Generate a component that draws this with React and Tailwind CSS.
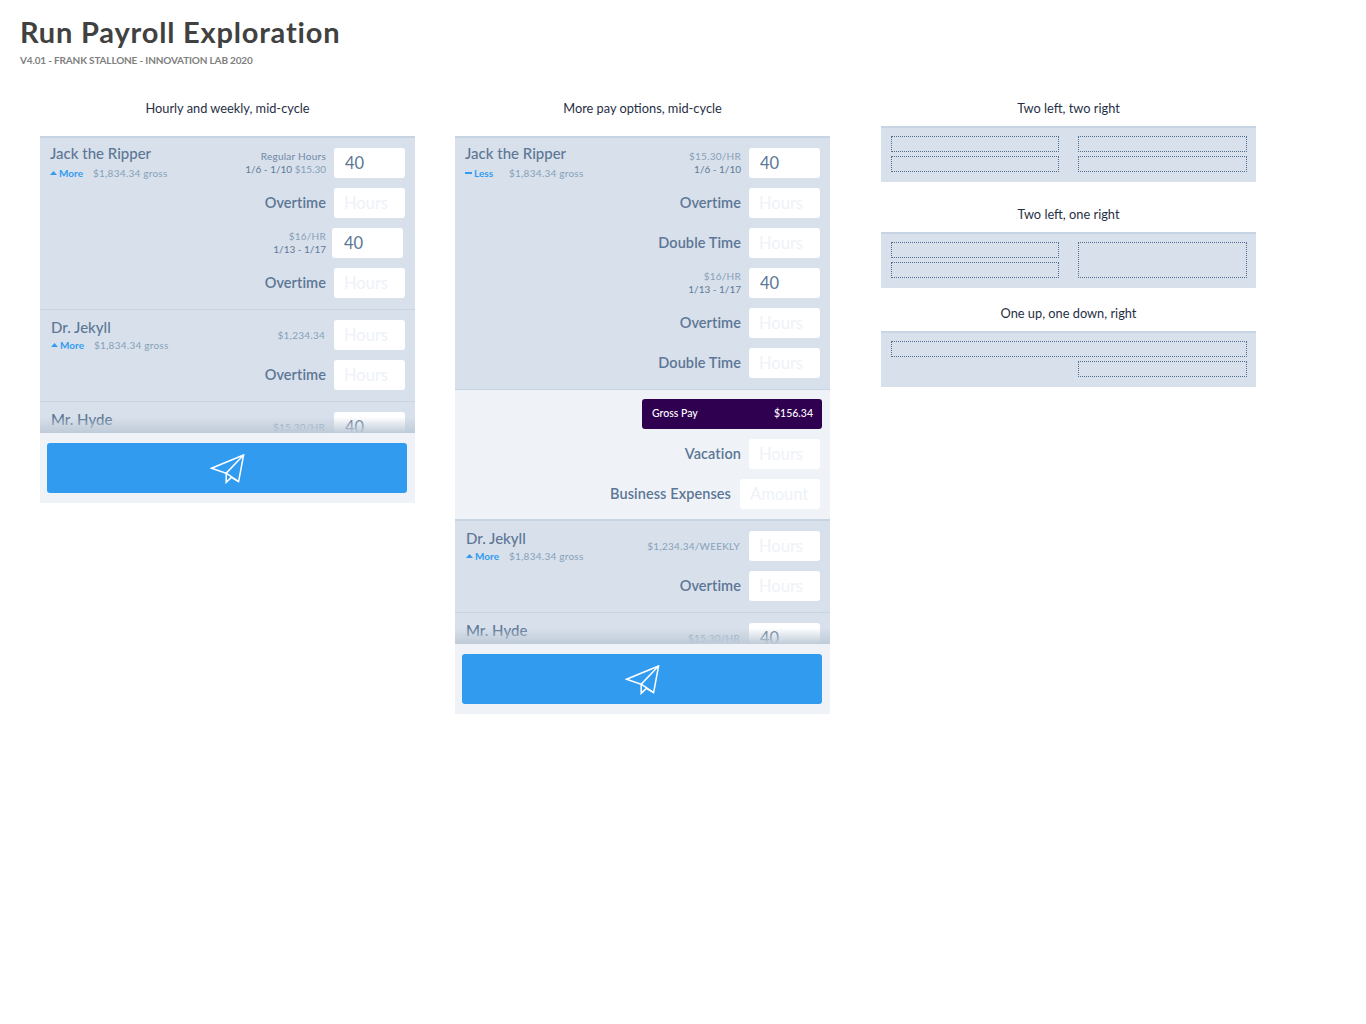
const Field = ({ value, placeholder = "Hours", wide, shift }) => (
  <input
    readOnly
    value={value || ""}
    placeholder={placeholder}
    className={`h-[30px] ${wide ? "w-[80px]" : "w-[71px]"} ${shift ? "mr-[2px] pl-[12px]" : value ? "pl-[11px]" : "pb-[1px] pl-[10px]"} shrink-0 rounded-[3px] bg-white pr-[10px] text-[16.5px] text-[#5c7795] outline-none placeholder:text-[#eef2f8]`}
  />
);

const Row = ({ label, top, bottom, value, placeholder, wide, shift }) => (
  <div className={`flex h-[30px] items-center justify-end ${wide ? "gap-[9px]" : "gap-2"}`}>
    {label ? (
      <span className="text-[14.5px] font-semibold tracking-[0.08px] text-[#5c7795]">{label}</span>
    ) : (
      <div className={`text-right text-[10px] leading-[13px] text-[#87a0b9] ${shift ? "mr-[-2px]" : ""} ${bottom ? "" : "mr-[1px]"}`}>
        {top && <div className="tracking-[0.25px]">{top}</div>}
        {bottom && <div className="text-[#5f7a98]">{bottom}</div>}
      </div>
    )}
    <Field value={value} placeholder={placeholder} wide={wide} shift={shift} />
  </div>
);

const Who = ({ name, less, indent, first }) => (
  <div className={`absolute ${first ? "top-[6px]" : "top-[8px]"} ${indent ? "left-[11px]" : "left-[10px]"} text-[#5c7795]`}>
    <div className="text-[15px] leading-[18px] font-medium">{name}</div>
    {name !== "Mr. Hyde" && (
      <div className={`${first ? "mt-[5px]" : "mt-[3px]"} flex items-center text-[10px] leading-[12px]`}>
        {less ? (
          <span className="mr-[2px] h-[2px] w-[7px] bg-[#339cf0]" />
        ) : (
          <svg width="7" height="4" viewBox="0 0 7 4" className="mr-[2px]">
            <path d="M3.5 0 7 4H0Z" fill="#339cf0" />
          </svg>
        )}
        <span className={`font-bold text-[#339cf0] ${less ? "w-[35px]" : "w-[34px]"}`}>{less ? "Less" : "More"}</span>
        <span className="tracking-[0.25px] text-[#87a0b9]">$1,834.34 gross</span>
      </div>
    )}
  </div>
);

const Person = ({ name, less, indent, first, children, divider = "border-b border-[#c6d4e4]" }) => (
  <div className={`relative flex flex-col gap-[10px] pt-[10px] pr-[10px] pb-[11px] ${divider}`}>
    <Who name={name} less={less} indent={indent} first={first} />
    {children}
  </div>
);

const Plane = () => (
  <svg width="36" height="30" viewBox="0 0 36 30" fill="none" stroke="white" strokeWidth="1.5" className="mt-[1px] ml-[1px]">
    <path d="M33.6 1 1.5 14.2 16.2 19.2 16.2 28.4 21.3 23.4 28.6 27.6Z" />
    <path d="M33.6 1 16.2 19.2 28.6 27.6" />
  </svg>
);

const Footer = () => (
  <div className="h-[70px] bg-[#eff3f8] px-[7px] pt-[10px]">
    <button className="flex h-[50px] w-[360px] items-center justify-center rounded-[3px] bg-[#319bf0]">
      <Plane />
    </button>
  </div>
);

const Caption = ({ children, className = "" }) => (
  <div className={`h-4 text-center text-[12.8px] leading-4 text-[#1f2f45] ${className}`}>{children}</div>
);

const Fade = () => (
  <div className="absolute right-0 bottom-0 left-0 h-[16px] bg-gradient-to-b from-[#d8e0eb]/0 to-[#bfcbd8]" />
);

const Dash = ({ className = "" }) => <div className={`rounded-[1px] border border-dotted border-[#4d6d91] ${className}`} />;

const Layout = ({ children, className = "" }) => (
  <div className={`h-[56px] border-t-2 border-[#c6d4e4] bg-[#d8e0eb] pt-[8px] pr-[9px] pl-[10px] ${className}`}>{children}</div>
);

const Pair = ({ single }) => (
  <div className="grid grid-cols-[168px_169px] gap-x-[19px] gap-y-1">
    <Dash className="h-4" />
    {single ? <Dash className="row-span-2 h-9" /> : <Dash className="h-4" />}
    <Dash className="h-4" />
    {!single && <Dash className="h-4" />}
  </div>
);

export default function App() {
  return (
    <div className="min-h-[1024px] bg-white pt-4 font-['Lato',sans-serif]">
      <div className="pl-5">
        <h1 className="text-[29px] leading-8 font-bold tracking-[0.8px] text-[#414141]">Run Payroll Exploration</h1>
        <div className="mt-[6px] text-[10px] leading-3 font-bold tracking-[-0.16px] text-[#808080]">
          V4.01 - FRANK STALLONE - INNOVATION LAB 2020
        </div>
      </div>

      <div className="mt-[34px] flex items-start pl-10">
        <div className="w-[375px]">
          <Caption>Hourly and weekly, mid-cycle</Caption>
          <div className="mt-5 border-t-2 border-[#c6d4e4] bg-[#d8e0eb]">
            <div className="relative h-[295px] overflow-hidden">
              <Person name="Jack the Ripper" first>
                <Row
                  top={<span className="text-[#6f89a5]">Regular Hours</span>}
                  bottom={<>1/6 - 1/10 <span className="text-[#87a0b9]">$15.30</span></>}
                  value="40"
                />
                <Row label="Overtime" />
                <Row top="$16/HR" bottom="1/13 - 1/17" value="40" shift />
                <Row label="Overtime" />
              </Person>
              <Person name="Dr. Jekyll" indent>
                <Row top="$1,234.34" />
                <Row label="Overtime" />
              </Person>
              <Person name="Mr. Hyde" indent divider="">
                <Row top="$15.30/HR" value="40" />
              </Person>
              <Fade />
            </div>
            <Footer />
          </div>
        </div>

        <div className="ml-10 w-[375px]">
          <Caption>More pay options, mid-cycle</Caption>
          <div className="mt-5 border-t-2 border-[#c6d4e4] bg-[#d8e0eb]">
            <Person name="Jack the Ripper" less first>
              <Row top="$15.30/HR" bottom="1/6 - 1/10" value="40" />
              <Row label="Overtime" />
              <Row label="Double Time" />
              <Row top="$16/HR" bottom="1/13 - 1/17" value="40" />
              <Row label="Overtime" />
              <Row label="Double Time" />
            </Person>
            <div className="flex h-[131px] flex-col gap-[10px] border-b-2 border-[#c6d4e4] bg-[#eff3f8] pt-[9px] pr-[10px]">
              <div className="mr-[-2px] flex h-[30px] w-[180px] items-center justify-between self-end rounded-[3px] bg-[#2f0050] pr-[9px] pb-[1px] pl-[10px] text-[10.5px] font-medium text-white">
                <span>Gross Pay</span>
                <span>$156.34</span>
              </div>
              <Row label="Vacation" />
              <Row label="Business Expenses" placeholder="Amount" wide />
            </div>
            <div className="relative h-[123px] overflow-hidden">
              <Person name="Dr. Jekyll" indent>
                <Row top="$1,234.34/WEEKLY" />
                <Row label="Overtime" />
              </Person>
              <Person name="Mr. Hyde" indent divider="">
                <Row top="$15.30/HR" value="40" />
              </Person>
              <Fade />
            </div>
            <Footer />
          </div>
        </div>

        <div className="ml-[51px] w-[375px]">
          <Caption>Two left, two right</Caption>
          <Layout className="mt-[10px]">
            <Pair />
          </Layout>
          <Caption className="mt-[24px]">Two left, one right</Caption>
          <Layout className="mt-[10px]">
            <Pair single />
          </Layout>
          <Caption className="mt-[17px]">One up, one down, right</Caption>
          <Layout className="mt-[10px]">
            <Dash className="h-4" />
            <Dash className="mt-1 ml-[187px] h-4 w-[169px]" />
          </Layout>
        </div>
      </div>
    </div>
  );
}
